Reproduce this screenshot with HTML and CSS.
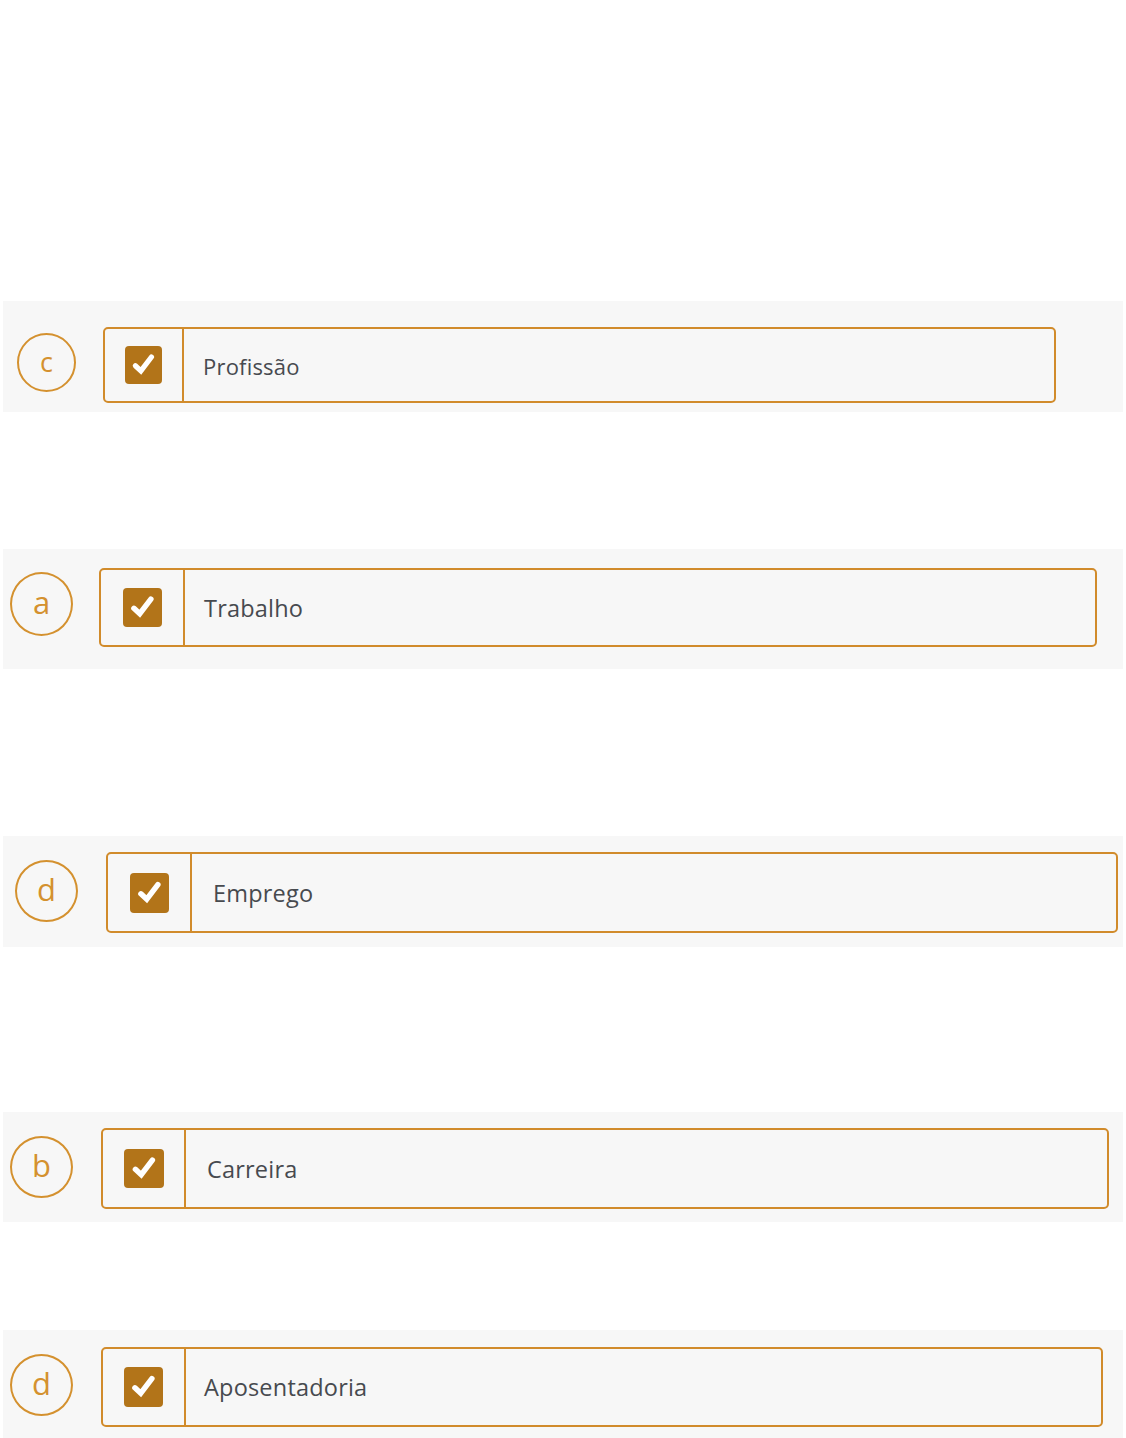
FILE: index.html
```html
<!DOCTYPE html>
<html lang="pt">
<head>
<meta charset="utf-8">
<title>Associação</title>
<link rel="stylesheet" href="styles.css">
</head>
<body>
<main class="list">
  <div class="row r1">
    <div class="badge">c</div>
    <div class="option">
      <div class="check-cell"><span class="checkbox"><svg viewBox="0 0 20 20"><polyline points="5.6,10.4 8.6,13.2 14.3,5.7" /></svg></span></div>
      <div class="label">Profissão</div>
    </div>
  </div>
  <div class="row r2">
    <div class="badge">a</div>
    <div class="option">
      <div class="check-cell"><span class="checkbox"><svg viewBox="0 0 20 20"><polyline points="5.6,10.4 8.6,13.2 14.3,5.7" /></svg></span></div>
      <div class="label">Trabalho</div>
    </div>
  </div>
  <div class="row r3">
    <div class="badge">d</div>
    <div class="option">
      <div class="check-cell"><span class="checkbox"><svg viewBox="0 0 20 20"><polyline points="5.6,10.4 8.6,13.2 14.3,5.7" /></svg></span></div>
      <div class="label">Emprego</div>
    </div>
  </div>
  <div class="row r4">
    <div class="badge">b</div>
    <div class="option">
      <div class="check-cell"><span class="checkbox"><svg viewBox="0 0 20 20"><polyline points="5.6,10.4 8.6,13.2 14.3,5.7" /></svg></span></div>
      <div class="label">Carreira</div>
    </div>
  </div>
  <div class="row r5">
    <div class="badge">d</div>
    <div class="option">
      <div class="check-cell"><span class="checkbox"><svg viewBox="0 0 20 20"><polyline points="5.6,10.4 8.6,13.2 14.3,5.7" /></svg></span></div>
      <div class="label">Aposentadoria</div>
    </div>
  </div>
</main>
</body>
</html>
```

FILE: styles.css
```css
html, body {
  margin: 0;
  padding: 0;
  background: #ffffff;
}

body {
  font-family: "Open Sans", "Noto Sans", "Liberation Sans", sans-serif;
  color: #474a4f;
}

.list {
  padding: 301px 3px 0 3px;
  display: flex;
  flex-direction: column;
}

.row {
  display: flex;
  align-items: flex-start;
  background: #f7f7f7;
  box-sizing: border-box;
}

.badge {
  flex: none;
  box-sizing: border-box;
  border: 2px solid #d4912f;
  border-radius: 50%;
  color: #d4912f;
  display: flex;
  align-items: center;
  justify-content: center;
  line-height: 1;
  font-weight: 400;
}

.option {
  flex: none;
  display: flex;
  align-items: stretch;
  box-sizing: border-box;
  border: 2px solid #d18b2b;
  border-radius: 5px;
  background: #f7f7f7;
}

.check-cell {
  flex: none;
  display: flex;
  align-items: center;
  justify-content: center;
  border-right: 2px solid #d18b2b;
}

.checkbox {
  display: flex;
  align-items: center;
  justify-content: center;
  background: #b27419;
  border-radius: 4px;
}

.checkbox svg {
  width: 100%;
  height: 100%;
}

.checkbox polyline {
  fill: none;
  stroke: #ffffff;
  stroke-width: 2.8;
  stroke-linecap: round;
  stroke-linejoin: miter;
}

.label {
  display: flex;
  align-items: center;
  padding-left: 19px;
  letter-spacing: 0.2px;
}

/* row 1 */
.r1 { height: 111px; }
.r1 .badge { width: 59px; height: 59px; margin: 32px 0 0 14px; font-size: 27px; padding-bottom: 3px; }
.r1 .option { width: 953px; height: 76px; margin: 26px 0 0 27px; }
.r1 .check-cell { width: 77px; }
.r1 .checkbox { width: 37px; height: 38px; }
.r1 .label { font-size: 22px; padding-top: 2px; }

/* row 2 */
.r2 { height: 120px; margin-top: 137px; }
.r2 .badge { width: 63px; height: 64px; margin: 23px 0 0 7px; font-size: 31px; padding-bottom: 3px; }
.r2 .option { width: 998px; height: 79px; margin: 19px 0 0 26px; }
.r2 .check-cell { width: 82px; }
.r2 .checkbox { width: 39px; height: 39px; }
.r2 .label { font-size: 23.5px; padding-left: 19px; }

/* row 3 */
.r3 { height: 111px; margin-top: 167px; }
.r3 .badge { width: 63px; height: 62px; margin: 24px 0 0 12px; font-size: 31px; padding-bottom: 3px; }
.r3 .option { width: 1012px; height: 81px; margin: 16px 0 0 28px; }
.r3 .check-cell { width: 82px; }
.r3 .checkbox { width: 39px; height: 40px; }
.r3 .label { font-size: 23.5px; padding-left: 21px; }

/* row 4 */
.r4 { height: 110px; margin-top: 165px; }
.r4 .badge { width: 63px; height: 62px; margin: 24px 0 0 7px; font-size: 31px; padding-bottom: 3px; }
.r4 .option { width: 1008px; height: 81px; margin: 16px 0 0 28px; }
.r4 .check-cell { width: 81px; }
.r4 .checkbox { width: 40px; height: 39px; }
.r4 .label { font-size: 23.5px; padding-left: 21px; }

/* row 5 */
.r5 { height: 108px; margin-top: 108px; }
.r5 .badge { width: 63px; height: 62px; margin: 24px 0 0 7px; font-size: 31px; padding-bottom: 3px; }
.r5 .option { width: 1002px; height: 80px; margin: 17px 0 0 28px; }
.r5 .check-cell { width: 81px; }
.r5 .checkbox { width: 39px; height: 40px; }
.r5 .label { font-size: 23.5px; padding-left: 18px; }
```
